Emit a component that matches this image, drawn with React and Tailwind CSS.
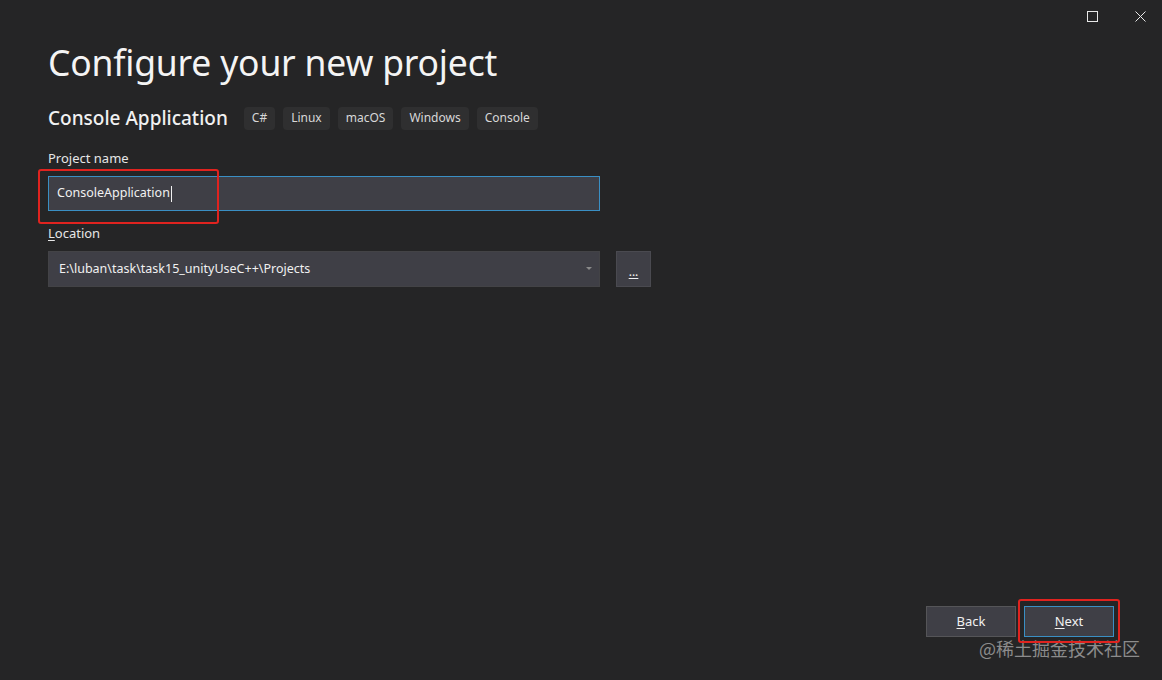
import { useState } from "react";

const tags = ["C#", "Linux", "macOS", "Windows", "Console"];

const Tag = ({ children }) => (
  <span className="rounded-[4px] bg-[#2f2f30] px-[8px] h-[23px] flex items-center text-[12px] text-[#d8d8d8]">
    {children}
  </span>
);

export default function App() {
  const [name] = useState("ConsoleApplication");

  return (
    <div
      className="w-[1162px] h-[680px] bg-[#252526] text-[#f1f1f1] flex flex-col overflow-hidden"
      style={{ fontFamily: '"Noto Sans", "Open Sans", "Noto Sans CJK SC", sans-serif' }}
    >
      {/* window buttons */}
      <div className="flex justify-end h-[32px] items-center pr-[16px] gap-[37px]">
        <svg width="11" height="11" viewBox="0 0 11 11">
          <rect x="0.5" y="0.5" width="10" height="10" fill="none" stroke="#e8e8e8" strokeWidth="1" />
        </svg>
        <svg width="11" height="11" viewBox="0 0 11 11">
          <path d="M0.5 0.5 L10.5 10.5 M10.5 0.5 L0.5 10.5" stroke="#e8e8e8" strokeWidth="1" />
        </svg>
      </div>

      <div className="flex flex-col px-[48px] flex-1">
        <h1 className="text-[35.5px] leading-[44px] font-normal mt-[8px] text-[#f4f4f4] tracking-[-0.2px]">
          Configure your new project
        </h1>

        <div className="flex items-center mt-[22px] h-[24px]">
          <span className="text-[19px] font-medium text-[#f1f1f1] mr-[16px]">Console Application</span>
          <div className="flex gap-[8px]">
            {tags.map((t) => (
              <Tag key={t}>{t}</Tag>
            ))}
          </div>
        </div>

        <label className="text-[13px] text-[#e6e6e6] mt-[19px] leading-[18px]">Project name</label>
        <div className="relative mt-[9px] w-[552px]">
          <div className="w-full h-[35px] bg-[#3f3f46] border border-[#3a8fc4] px-[8px] text-[12.5px] text-[#f1f1f1] flex items-center">
            {name}
            <span className="inline-block w-px h-[16px] bg-[#f1f1f1] ml-px" />
          </div>
          <div className="absolute left-[-10px] top-[-7px] w-[181px] h-[55px] border-2 border-[#e0231f] rounded-[3px] pointer-events-none" />
        </div>

        <label className="text-[13px] text-[#e6e6e6] mt-[13px] leading-[18px]">
          <span className="underline underline-offset-2">L</span>ocation
        </label>
        <div className="flex items-center mt-[9px] gap-[16px]">
          <div className="w-[552px] h-[36px] bg-[#3f3f46] border border-[#434346] flex items-center justify-between px-[10px]">
            <span className="text-[12.5px] text-[#f1f1f1]">E:\luban\task\task15_unityUseC++\Projects</span>
            <svg width="6" height="4" viewBox="0 0 6 4" className="mr-[-3px]">
              <path d="M0 0 L6 0 L3 3 Z" fill="#8a8a8a" />
            </svg>
          </div>
          <button className="w-[35px] h-[36px] bg-[#3f3f46] border border-[#4a4a50] text-[12px] text-[#f1f1f1] flex items-center justify-center pt-[6px]">
            <span className="underline underline-offset-2 leading-none">...</span>
          </button>
        </div>

        <div className="flex-1" />

        <div className="flex justify-end gap-[8px] mr-0">
          <button className="w-[90px] h-[31px] bg-[#3f3f46] border border-[#555558] text-[13px] text-[#f1f1f1]">
            <span className="underline underline-offset-2">B</span>ack
          </button>
          <div className="relative">
            <button className="w-[90px] h-[31px] bg-[#3f3f46] border border-[#3a8fc4] text-[13px] text-[#f1f1f1]">
              <span className="underline underline-offset-2">N</span>ext
            </button>
            <div className="absolute left-[-6px] top-[-7px] w-[102px] h-[44px] border-2 border-[#e0231f] rounded-[3px] pointer-events-none" />
          </div>
        </div>

        <div className="flex justify-end mt-[0px] mb-[21px] mr-[-26px]">
          <span
            className="text-[18px] text-[#8c8c8c] leading-[22px]"
            style={{ fontFamily: '"Noto Sans CJK SC", sans-serif' }}
          >
            @稀土掘金技术社区
          </span>
        </div>
      </div>
    </div>
  );
}
